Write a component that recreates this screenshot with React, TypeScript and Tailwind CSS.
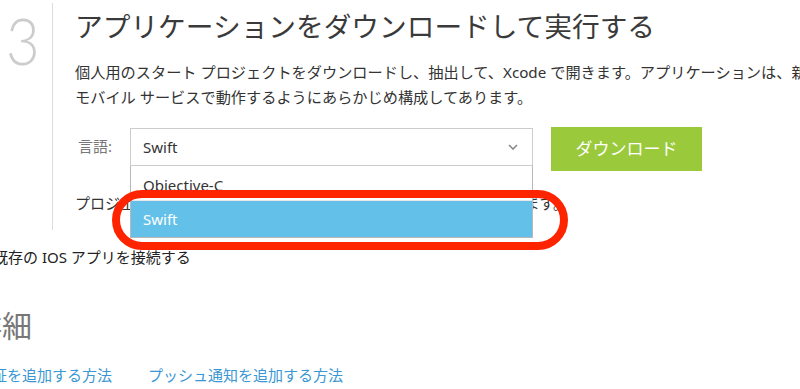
import React from "react";

export default function App() {
  return (
    <div className="relative w-[800px] h-[389px] overflow-hidden bg-white text-[#333] font-['Noto_Sans','Noto_Sans_CJK_JP',sans-serif]">
      <div className="flex">
        <div className="w-[52px] shrink-0 pt-[7px] pl-[6px]">
          <div className="origin-left scale-x-[0.88] font-['Lato',sans-serif] font-light text-[66px] leading-[66px] text-[#cccccc]">3</div>
        </div>
        <div className="mt-[3px] w-[760px] shrink-0 border-l border-[#dcdcdc] pl-[22px] pb-[14px]">
          <h2 className="mt-[5px] whitespace-nowrap text-[27.7px] leading-[36px] font-normal text-[#3a3a3a]">
            アプリケーションをダウンロードして実行する
          </h2>
          <p className="mt-[16px] whitespace-nowrap text-[15.2px] leading-[25px] text-[#333]">
            個人用のスタート プロジェクトをダウンロードし、抽出して、Xcode で開きます。アプリケーションは、新しい
            <br />
            モバイル サービスで動作するようにあらかじめ構成してあります。
          </p>
          <div className="mt-[17px] flex items-start">
            <div className="ml-[3px] mt-[9px] w-[42px] text-[15px] leading-[20px] text-[#777]">言語:</div>
            <div className="relative ml-[10px] mt-[1px] w-[403px]">
              <div className="flex h-[38px] items-center justify-between border border-[#cccccc] bg-white pl-[12px] pr-[14px] text-[15px] text-[#333]">
                <span>Swift</span>
                <svg width="10" height="6" viewBox="0 0 10 6" fill="none">
                  <path d="M1 1 L5 5 L9 1" stroke="#8a8a8a" strokeWidth="1.6" />
                </svg>
              </div>
              <div className="absolute left-0 top-full z-10 w-full border-x border-b border-[#b8b8b8] bg-white text-[15px]">
                <div className="flex h-[34px] items-center pl-[12px] pt-[4px] text-[#333]">Objective-C</div>
                <div className="flex h-[37px] items-center border-t border-[#e8e8e8] bg-[#63c1e9] pl-[12px] text-white">Swift</div>
              </div>
              <div className="pointer-events-none absolute left-[-18px] top-[62px] z-20 h-[60px] w-[456px] rounded-full border-[8px] border-[#ff2400]" />
            </div>
            <button className="ml-[18px] flex h-[44px] w-[151px] items-center justify-center bg-[#9aca3c] text-[17px] text-white">
              ダウンロード
            </button>
          </div>
          <p className="mt-[20px] whitespace-nowrap text-[15px] leading-[25px] text-[#333]">
            プロジェクトのダウンロードが完了するまで、約数分時間がかかります。
          </p>
        </div>
      </div>
      <div className="mt-[15px] ml-[-7px] whitespace-nowrap text-[15px] leading-[25px] text-[#222]">
        既存の IOS アプリを接続する
      </div>
      <h3 className="mt-[36px] ml-[-28px] whitespace-nowrap text-[30px] leading-[40px] font-normal text-[#777]">
        詳細
      </h3>
      <div className="mt-[17px] ml-[-23px] flex gap-[36px] whitespace-nowrap text-[15px] leading-[25px] text-[#3b97d3]">
        <a>認証を追加する方法</a>
        <a>プッシュ通知を追加する方法</a>
      </div>
    </div>
  );
}
